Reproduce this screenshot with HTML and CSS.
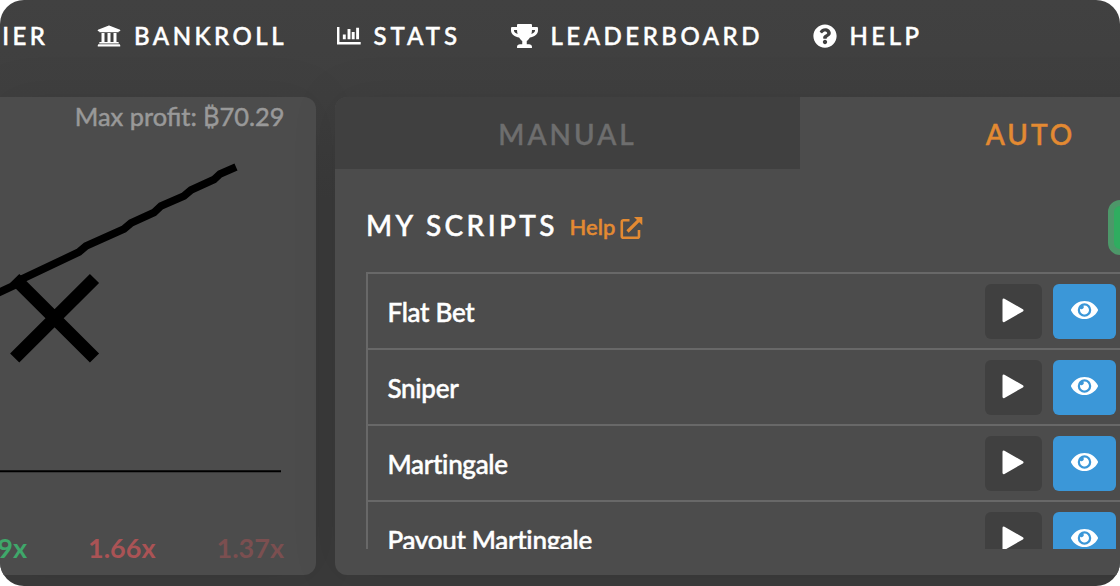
FILE: index.html
```html
<!DOCTYPE html>
<html lang="en">
<head>
<meta charset="utf-8">
<title>My Scripts</title>
<link rel="stylesheet" href="styles.css">
</head>
<body>
<svg class="sprite" aria-hidden="true">
  <symbol id="play" viewBox="0 0 22 25"><path d="M1.8 1.8 20.2 12.3 1.8 22.9Z" fill="#fff" stroke="#fff" stroke-width="2.6" stroke-linejoin="round"/></symbol>
  <symbol id="eye" viewBox="0 0 576 512"><path fill="#fff" d="M572.52 241.4C518.29 135.59 410.93 64 288 64S57.68 135.64 3.48 241.41a32.35 32.35 0 0 0 0 29.19C57.71 376.41 165.07 448 288 448s230.32-71.64 284.52-177.41a32.35 32.35 0 0 0 0-29.19zM288 400a144 144 0 1 1 144-144 143.93 143.93 0 0 1-144 144zm0-240a95.31 95.31 0 0 0-25.31 3.79 47.85 47.85 0 0 1-66.9 66.9A95.78 95.78 0 1 0 288 160z"/></symbol>
</svg>
<div class="app">
  <nav class="nav">
    <a class="nav-item nav-cashier"><span>IER</span></a>
    <a class="nav-item nav-bankroll">
      <svg class="icon" width="24" height="24" viewBox="0 0 512 512"><path fill="#fff" d="M496 128v16a8 8 0 0 1-8 8h-24v12c0 6.627-5.373 12-12 12H60c-6.627 0-12-5.373-12-12v-12H24a8 8 0 0 1-8-8v-16a8 8 0 0 1 4.941-7.392l232-88a7.996 7.996 0 0 1 6.118 0l232 88A8 8 0 0 1 496 128zm-24 304H40c-13.255 0-24 10.745-24 24v16a8 8 0 0 0 8 8h464a8 8 0 0 0 8-8v-16c0-13.255-10.745-24-24-24zM96 192v192H60c-6.627 0-12 5.373-12 12v20h416v-20c0-6.627-5.373-12-12-12h-36V192h-64v192h-64V192h-64v192h-64V192H96z"/></svg>
      <span>BANKROLL</span>
    </a>
    <a class="nav-item nav-stats">
      <svg class="icon" width="24" height="24" viewBox="0 0 24 24"><path d="M1.2 3V19.3H23.7" fill="none" stroke="#fff" stroke-width="2.5"/><path d="M7.3 10.5v4.8M12 5v10.3M16.2 8v7.3M20.6 3.7v11.6" fill="none" stroke="#fff" stroke-width="2.9"/></svg>
      <span>STATS</span>
    </a>
    <a class="nav-item nav-leader">
      <svg class="icon" width="27" height="24" viewBox="0 0 576 512"><path fill="#fff" d="M552 64H448V24c0-13.300-10.700-24-24-24H152c-13.300 0-24 10.700-24 24v40H24C10.700 64 0 74.700 0 88v56c0 35.700 22.500 72.400 61.900 100.700 31.500 22.700 69.800 37.100 110 41.700C203.300 338.500 240 360 240 360v72h-48c-35.300 0-64 20.700-64 56v12c0 6.600 5.400 12 12 12h296c6.600 0 12-5.400 12-12v-12c0-35.300-28.700-56-64-56h-48v-72s36.700-21.500 68.100-73.600c40.300-4.600 78.600-19 110-41.700 39.300-28.300 61.900-65 61.900-100.700V88c0-13.300-10.700-24-24-24zM99.300 192.800C74.900 175.200 64 155.600 64 144v-16h64.200c1 32.600 5.800 61.200 12.800 86.200-15.100-5.200-29.200-12.400-41.700-21.400zM512 144c0 16.100-17.700 36.100-35.300 48.800-12.500 9-26.700 16.200-41.800 21.400 7-25 11.800-53.600 12.800-86.200H512v16z"/></svg>
      <span>LEADERBOARD</span>
    </a>
    <a class="nav-item nav-help">
      <svg class="icon" width="24" height="24" viewBox="0 0 512 512"><path fill="#fff" d="M504 256c0 136.997-111.043 248-248 248S8 392.997 8 256C8 119.083 119.043 8 256 8s248 111.083 248 248zM262.655 90c-54.497 0-89.255 22.957-116.549 63.758-3.536 5.286-2.353 12.415 2.715 16.258l34.699 26.310c5.205 3.947 12.621 3.008 16.665-2.122 17.864-22.658 30.113-35.797 57.303-35.797 20.429 0 45.698 13.148 45.698 32.958 0 14.976-12.363 22.667-32.534 33.976C247.128 238.528 216 254.941 216 296v4c0 6.627 5.373 12 12 12h56c6.627 0 12-5.373 12-12v-1.333c0-28.462 83.186-29.647 83.186-106.667 0-58.002-60.165-102-116.531-102zM256 338c-25.365 0-46 20.635-46 46 0 25.364 20.635 46 46 46s46-20.636 46-46c0-25.365-20.635-46-46-46z"/></svg>
      <span>HELP</span>
    </a>
  </nav>
  <main class="main">
    <section class="panel game">
      <div class="profit">Max profit: <span class="coin">₿</span>70.29</div>
      <svg class="chart" width="315" height="345" viewBox="0 135 315 345">
        <path d="M-2 293 15 285 22 279 79 252 86 246 124 229 131 223 154 212.500 161 206 184 196 191 190 214 179.500 220 174 236 167" fill="none" stroke="#000" stroke-width="7.600"/>
        <path d="M14.700 278.500 94.500 358M94.500 278.500 14.700 358" fill="none" stroke="#000" stroke-width="13"/>
        <path d="M0 471.300H281" stroke="#000" stroke-width="2"/>
      </svg>
      <div class="history"><span class="win">9x</span><span class="loss">1.66x</span><span class="loss faded">1.37x</span></div>
    </section>
    <section class="panel bets">
      <div class="tabs"><div class="tab">MANUAL</div><div class="tab active">AUTO</div></div>
      <header class="scripts-head">
        <h2>MY SCRIPTS</h2>
        <a class="help">Help</a>
        <svg class="ext" width="24" height="24" viewBox="0 0 24 24" fill="none" stroke="#e38a32" stroke-width="2.600"><path d="M9.500 4.300H3.500Q1.800 4.300 1.800 5.800V20.200Q1.800 21.700 3.500 21.700H17.400Q19 21.700 19 20.200V14"/><path d="M7.500 15.500 19.500 3.700" stroke-width="3.200"/><path d="M14 1H22.300V9.200Z" fill="#e38a32" stroke="none"/></svg>
        <button class="add"></button>
      </header>
      <div class="list">
        <div class="row"><span>Flat Bet</span><button class="btn run"><svg width="22" height="25"><use href="#play"/></svg></button><button class="btn view"><svg width="27" height="24"><use href="#eye"/></svg></button></div>
        <div class="row"><span>Sniper</span><button class="btn run"><svg width="22" height="25"><use href="#play"/></svg></button><button class="btn view"><svg width="27" height="24"><use href="#eye"/></svg></button></div>
        <div class="row"><span>Martingale</span><button class="btn run"><svg width="22" height="25"><use href="#play"/></svg></button><button class="btn view"><svg width="27" height="24"><use href="#eye"/></svg></button></div>
        <div class="row"><span>Payout Martingale</span><button class="btn run"><svg width="22" height="25"><use href="#play"/></svg></button><button class="btn view"><svg width="27" height="24"><use href="#eye"/></svg></button></div>
      </div>
    </section>
  </main>
</div>
</body>
</html>
```

FILE: styles.css
```css
* { box-sizing: border-box; }
body { margin: 0; background: #fff; font-family: Lato, sans-serif; color: #fff; overflow: hidden; -webkit-text-stroke: .5px; }
.sprite { display: none; }
.app { width: 1120px; height: 586px; border-radius: 24px; overflow: hidden; background: linear-gradient(#414141, #3f3f3f 97px, #3b3b3b 200px); }
.nav { display: flex; height: 97px; }
.nav-item { display: flex; flex: none; height: 72px; align-items: center; font-size: 24px; font-weight: 500; letter-spacing: 3.500px; white-space: nowrap; }
.nav-item span { padding-bottom: 2px; }
.icon { flex: none; display: block; }
.nav-cashier { width: 97px; justify-content: flex-end; padding-right: 48.500px; }
.nav-bankroll { width: 239px; gap: 13px; }
.nav-stats { width: 175px; gap: 12.500px; padding-left: 1px; letter-spacing: 4px; }
.nav-leader { width: 302px; gap: 12.500px; }
.nav-help { gap: 12.500px; }
.main { display: flex; gap: 19.500px; height: 477.500px; }
.panel { background: #4c4c4c; overflow: hidden; flex: none; box-shadow: 0 0 50px rgba(0, 0, 0, .08); }
.game { width: 315.500px; border-radius: 0 12px 12px 0; }
.profit { height: 38px; padding: 1px 31px 0 0; line-height: 37px; text-align: right; font-size: 25.400px; color: #999; }
.coin { font-family: Inter, sans-serif; font-size: 25px; line-height: 1; }
.chart { display: block; }
.history { display: flex; justify-content: flex-end; gap: 61px; padding: 52px 31.500px 0 0; line-height: 31px; font-size: 27px; font-weight: 700; -webkit-text-stroke: 0; }
.win { color: #3fa76a; }
.loss { color: #aa5355; }
.faded { color: #7b4f50; }
.bets { width: 930px; border-radius: 12px; }
.tabs { display: flex; height: 72px; }
.tab { width: 465px; line-height: 74px; text-align: center; font-size: 28px; font-weight: 500; letter-spacing: 3px; background: #404040; color: #6e6e6e; }
.active { background: #4c4c4c; color: #e38a32; padding-right: 4px; }
.scripts-head { display: flex; height: 103px; padding: 31px 0 0 31px; }
h2 { margin: 0; width: 203.500px; font-size: 28px; line-height: 50px; font-weight: 500; letter-spacing: 3.400px; white-space: nowrap; }
.help { width: 50.500px; font-size: 22px; line-height: 54px; color: #e38a32; font-weight: 500; }
.ext { margin-top: 16px; }
.add { width: 120px; height: 55px; margin-left: 463.500px; border: 6px solid #4d9769; border-radius: 12px; background: #2fad60; }
.list { height: 277px; margin-left: 31px; overflow: hidden; border: 2px solid #686868; border-bottom: 0; }
.row { display: flex; height: 76px; padding-top: 10px; border-bottom: 2px solid #686868; }
.row span { width: 617px; padding-left: 19.500px; line-height: 56px; font-size: 26px; font-weight: 500; letter-spacing: -.3px; }
.btn { flex: none; display: flex; align-items: center; justify-content: center; height: 55px; padding: 0 0 2px; border: 0; border-radius: 6px; }
.run { width: 57px; padding-right: 1px; background: #404040; }
.view { width: 62.500px; padding-bottom: 3px; margin-left: 11px; background: #3b97d8; }
```
